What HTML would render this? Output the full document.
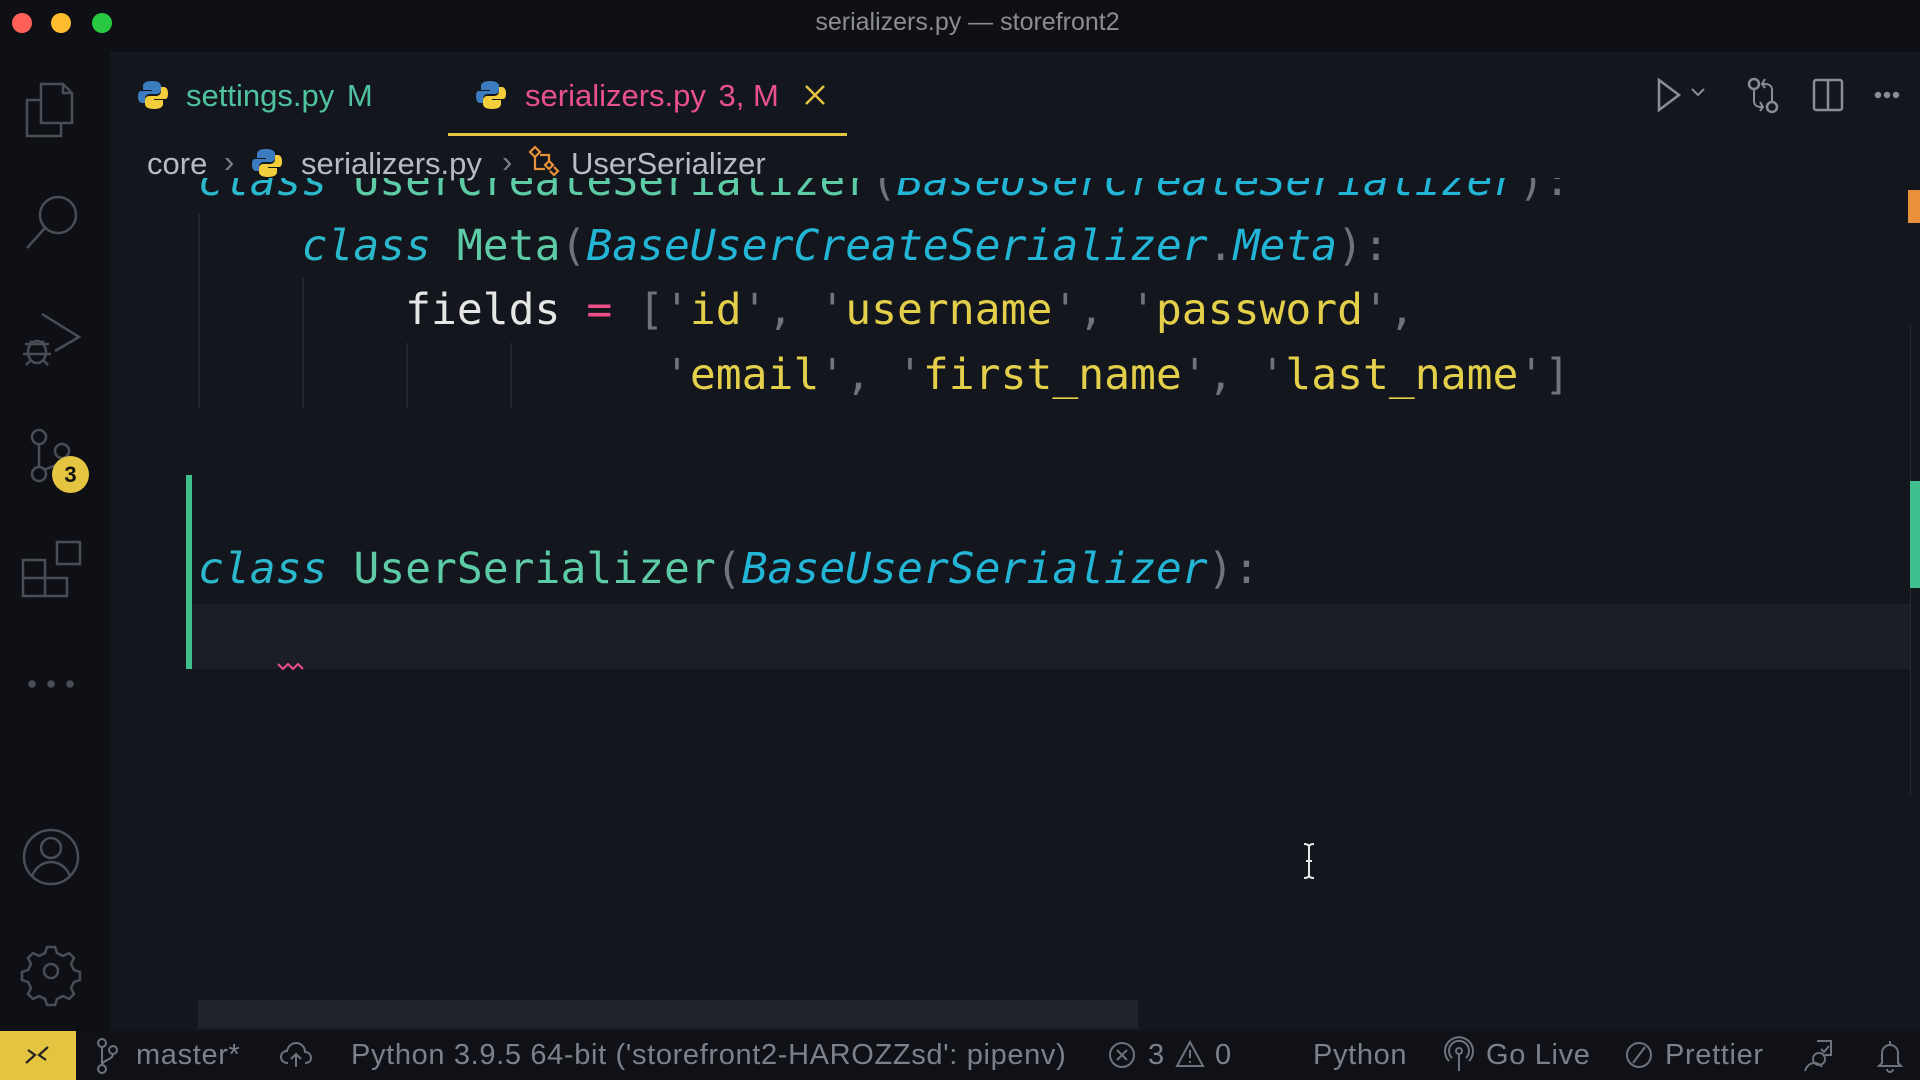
<!DOCTYPE html>
<html><head><meta charset="utf-8"><style>
*{margin:0;padding:0;box-sizing:border-box}
body{width:1920px;height:1080px;overflow:hidden;background:#13161d;font-family:"Liberation Sans",sans-serif;position:relative}
.abs{position:absolute}
#title{left:0;top:0;width:1920px;height:52px;background:#0e1015}
#act{left:0;top:52px;width:110px;height:979px;background:#0e1015}
#status{left:0;top:1031px;width:1920px;height:49px;background:#0f1116;color:#7d808a;font-size:29px;letter-spacing:0.65px}
#status span{position:absolute;top:8px;white-space:nowrap}
.code{position:absolute;left:198px;font-family:"DejaVu Sans Mono","Liberation Mono",monospace;font-size:43px;line-height:64.6px;white-space:pre;color:#e6e6e6}
.k{color:#2bb8cc;font-style:italic}
.c{color:#5ccba6}
.b{color:#22b5d6;font-style:italic}
.p{color:#6f737d}
.s{color:#e3cf4a}
.o{color:#f0508a}
.tab{position:absolute;top:78px;font-size:31px;white-space:nowrap}
.guide{position:absolute;width:2px;background:#23262e}
svg{position:absolute;overflow:visible}
</style></head><body>
<div id="title" class="abs"></div>
<div class="abs" style="left:12px;top:13px;width:20px;height:20px;border-radius:50%;background:#fe5f57"></div>
<div class="abs" style="left:51px;top:13px;width:20px;height:20px;border-radius:50%;background:#febc2e"></div>
<div class="abs" style="left:92px;top:13px;width:20px;height:20px;border-radius:50%;background:#28c840"></div>
<div class="abs" style="left:0;top:8px;width:1935px;text-align:center;color:#8b8d93;font-size:25px">serializers.py — storefront2</div>

<div id="act" class="abs"></div>
<svg width="110" height="1000" style="left:0;top:0" fill="none" stroke="#4a4d56" stroke-width="2.5">
<path d="M41 84h22l9 9v30H41z M63 84v9h9 M41 100H27v36h34v-13"/>
<circle cx="58" cy="215" r="18"/><path d="M45 228L27 248"/>
<path d="M42 314l37 23-24 14"/><ellipse cx="37" cy="352" rx="9" ry="11"/><path d="M25 344h24M23 354h28M26 365l4-4M48 365l-4-4M30 341l3 3M44 341l-3 3"/>
<circle cx="39" cy="437" r="7"/><circle cx="62" cy="451" r="7"/><circle cx="39" cy="474" r="7"/><path d="M39 444v23M62 458c0 7-10 8-18 12"/>
<path d="M23 560h22v36H23z M23 578h44v18H45 M57 542h23v22H57z"/>
<circle cx="32" cy="684" r="2.5" fill="#4a4d56"/><circle cx="51" cy="684" r="2.5" fill="#4a4d56"/><circle cx="70" cy="684" r="2.5" fill="#4a4d56"/>
<circle cx="51" cy="857" r="27"/><circle cx="51" cy="848" r="10"/><path d="M32 876c4-10 12-14 19-14s15 4 19 14"/>
<circle cx="51" cy="971" r="7"/><path d="M47 947h8l2 6 6 3 6-3 5 5-3 6 3 6 6 2v8l-6 2-3 6 3 6-5 5-6-3-6 3-2 6h-8l-2-6-6-3-6 3-5-5 3-6-3-6-6-2v-8l6-2 3-6-3-6 5-5 6 3 6-3z"/>
</svg>
<div class="abs" style="left:52px;top:456px;width:37px;height:37px;border-radius:50%;background:#e4c441;color:#111;font-weight:bold;font-size:22px;text-align:center;line-height:37px">3</div>

<svg width="30" height="30" style="left:138px;top:80px"><path d="M14 1c-6 0-9 2-9 5v4h9v1H3c-3 0-3 4-3 6 0 4 2 6 4 6h3v-4c0-3 2-5 5-5h7c2 0 4-2 4-4V6c0-3-3-5-9-5z" fill="#3b7bbf"/><path d="M16 29c6 0 9-2 9-5v-4h-9v-1h11c3 0 3-4 3-6 0-4-2-6-4-6h-3v4c0 3-2 5-5 5h-7c-2 0-4 2-4 4v4c0 3 3 5 9 5z" fill="#f2cd3c"/></svg>
<div class="tab" style="left:186px;color:#4fc2a0">settings.py <span style="margin-left:4px">M</span></div>
<svg width="30" height="30" style="left:476px;top:80px"><path d="M14 1c-6 0-9 2-9 5v4h9v1H3c-3 0-3 4-3 6 0 4 2 6 4 6h3v-4c0-3 2-5 5-5h7c2 0 4-2 4-4V6c0-3-3-5-9-5z" fill="#3b7bbf"/><path d="M16 29c6 0 9-2 9-5v-4h-9v-1h11c3 0 3-4 3-6 0-4-2-6-4-6h-3v4c0 3-2 5-5 5h-7c-2 0-4 2-4 4v4c0 3 3 5 9 5z" fill="#f2cd3c"/></svg>
<div class="tab" style="left:525px;color:#e9508f">serializers.py <span style="margin-left:4px">3, M</span></div>
<svg width="24" height="24" style="left:804px;top:84px" stroke="#e4c441" stroke-width="2.5"><path d="M2 2l18 18M20 2L2 20"/></svg>
<div class="abs" style="left:448px;top:133px;width:399px;height:3px;background:#e4c441"></div>

<svg width="260" height="40" style="left:1650px;top:75px" fill="none" stroke="#8a8d95" stroke-width="2.5">
<path d="M9 5l20 15-20 15z"/><path d="M42 14l6 6 6-6" stroke-width="2"/>
<g transform="translate(15 0)"><circle cx="89" cy="9" r="5"/><circle cx="107" cy="32" r="5"/><path d="M89 14v12c0 4 3 6 7 6h2M107 27V15c0-4-3-6-7-6h-2M100 4l-3 5 3 4M95 27l3 5-3 4" stroke-width="2"/></g>
<rect x="164" y="5" width="28" height="30" rx="2"/><path d="M178 5v30"/>
<circle cx="228" cy="20" r="2" fill="#8a8d95"/><circle cx="237" cy="20" r="2" fill="#8a8d95"/><circle cx="246" cy="20" r="2" fill="#8a8d95"/>
</svg>

<div class="abs" style="left:110px;top:176px;width:1800px;height:830px;overflow:hidden">
 <div class="abs" style="left:82px;top:428px;width:1800px;height:65px;background:#1b1e26"></div>
 <div class="guide" style="left:88px;top:38px;height:194px"></div>
 <div class="guide" style="left:192px;top:102px;height:130px"></div>
 <div class="guide" style="left:296px;top:167px;height:65px"></div>
 <div class="guide" style="left:400px;top:167px;height:65px"></div>
 <div class="abs" style="left:76px;top:299px;width:6px;height:194px;background:#3fbf8e"></div>
 <div class="code" style="left:88px;top:-27px"><span class="k">class</span> <span class="c">UserCreateSerializer</span><span class="p">(</span><span class="b">BaseUserCreateSerializer</span><span class="p">):</span>
    <span class="k">class</span> <span class="c">Meta</span><span class="p">(</span><span class="b">BaseUserCreateSerializer</span><span class="p">.</span><span class="b">Meta</span><span class="p">):</span>
        fields <span class="o">=</span> <span class="p">['</span><span class="s">id</span><span class="p">',</span> <span class="p">'</span><span class="s">username</span><span class="p">',</span> <span class="p">'</span><span class="s">password</span><span class="p">',</span>
                  <span class="p">'</span><span class="s">email</span><span class="p">',</span> <span class="p">'</span><span class="s">first_name</span><span class="p">',</span> <span class="p">'</span><span class="s">last_name</span><span class="p">']</span>


<span class="k">class</span> <span class="c">UserSerializer</span><span class="p">(</span><span class="b">BaseUserSerializer</span><span class="p">):</span>
</div>
 <svg width="30" height="10" style="left:168px;top:486px" fill="none" stroke="#f0508a" stroke-width="2"><path d="M0 2l5 5 5-5 5 5 5-5 5 5"/></svg>
</div>
<div class="abs" style="left:198px;top:1000px;width:940px;height:29px;background:#1f222a"></div>

<div class="abs" style="left:110px;top:136px;width:1800px;height:42px;background:#13161d"></div>
<div class="tab" style="left:147px;top:146px;color:#b9bbc1">core</div>
<div class="tab" style="left:224px;top:144px;color:#7d808a">›</div>
<svg width="30" height="30" style="left:252px;top:148px"><path d="M14 1c-6 0-9 2-9 5v4h9v1H3c-3 0-3 4-3 6 0 4 2 6 4 6h3v-4c0-3 2-5 5-5h7c2 0 4-2 4-4V6c0-3-3-5-9-5z" fill="#3b7bbf"/><path d="M16 29c6 0 9-2 9-5v-4h-9v-1h11c3 0 3-4 3-6 0-4-2-6-4-6h-3v4c0 3-2 5-5 5h-7c-2 0-4 2-4 4v4c0 3 3 5 9 5z" fill="#f2cd3c"/></svg>
<div class="tab" style="left:301px;top:146px;color:#b9bbc1">serializers.py</div>
<div class="tab" style="left:502px;top:144px;color:#7d808a">›</div>
<svg width="34" height="32" style="left:528px;top:146px" fill="none" stroke="#e8913a" stroke-width="2.2"><path d="M2 6l5-5 5 5-5 5z M7 11v12h10 M17 19l4-4 4 4-4 4z M21 15V9h-9 M22 25l4 4 4-4-4-4"/></svg>
<div class="tab" style="left:571px;top:146px;color:#b9bbc1">UserSerializer</div>

<div class="abs" style="left:1908px;top:190px;width:12px;height:33px;background:#e8913a"></div>
<div class="abs" style="left:1910px;top:325px;width:1px;height:470px;background:#262932"></div>
<div class="abs" style="left:1910px;top:481px;width:10px;height:107px;background:#3fbf8e"></div>

<svg width="14" height="36" style="left:1302px;top:843px" stroke="#e6e6e6" stroke-width="2" fill="none"><path d="M2 1c3 0 5 1 5 3v28c0 2-2 3-5 3M12 1c-3 0-5 1-5 3v28c0 2 2 3 5 3M4 18h6"/></svg>

<div id="status" class="abs">
 <div class="abs" style="left:0;top:0;width:76px;height:49px;background:#e4c441"></div>
 <svg width="30" height="30" style="left:22px;top:10px" stroke="#222" stroke-width="2.2" fill="none"><path d="M4 22l9-8-7-5M26 6l-9 8 7 5"/></svg>
 <svg width="24" height="36" style="left:96px;top:7px" stroke="#6f727b" stroke-width="2" fill="none"><circle cx="6" cy="5" r="4"/><circle cx="6" cy="31" r="4"/><circle cx="17" cy="12" r="4"/><path d="M6 9v18M17 16c0 6-11 6-11 11"/></svg>
 <span style="left:136px">master*</span>
 <svg width="32" height="30" style="left:280px;top:10px" stroke="#6f727b" stroke-width="2" fill="none"><path d="M8 22c-5 0-7-3-7-6s2-6 6-6c1-5 5-8 9-8s9 3 9 9c4 0 6 3 6 6 0 3-2 5-6 5M16 26V14M11 18l5-5 5 5"/></svg>
 <span style="left:351px">Python 3.9.5 64-bit ('storefront2-HAROZZsd': pipenv)</span>
 <svg width="30" height="30" style="left:1108px;top:10px" stroke="#6f727b" stroke-width="2" fill="none"><circle cx="14" cy="14" r="12"/><path d="M9 9l10 10M19 9L9 19"/></svg>
 <span style="left:1148px">3</span>
 <svg width="30" height="30" style="left:1176px;top:9px" stroke="#6f727b" stroke-width="2" fill="none"><path d="M14 2l13 24H1z M14 10v8M14 21v2"/></svg>
 <span style="left:1215px">0</span>
 <span style="left:1313px">Python</span>
 <svg width="30" height="34" style="left:1446px;top:8px" stroke="#6f727b" stroke-width="2" fill="none"><circle cx="13" cy="12" r="3"/><path d="M13 15v17M6 19a10 10 0 1 1 14 0M3 22a14 14 0 1 1 20 0"/></svg>
 <span style="left:1486px">Go Live</span>
 <svg width="30" height="30" style="left:1625px;top:10px" stroke="#6f727b" stroke-width="2" fill="none"><circle cx="14" cy="14" r="12"/><path d="M20 6L8 22"/></svg>
 <span style="left:1665px">Prettier</span>
 <svg width="32" height="34" style="left:1803px;top:8px" stroke="#6f727b" stroke-width="2" fill="none"><path d="M14 2h14v14h-6M10 20a6 6 0 1 0 0-.1M2 32c2-6 6-8 9-8s6 1 8 4M18 10l3 3 5-6"/></svg>
 <svg width="28" height="34" style="left:1876px;top:8px" stroke="#6f727b" stroke-width="2" fill="none"><path d="M14 2v3M6 24V14a8 8 0 0 1 16 0v10l3 3H3zM11 30a3 3 0 0 0 6 0"/></svg>
</div>
</body></html>
